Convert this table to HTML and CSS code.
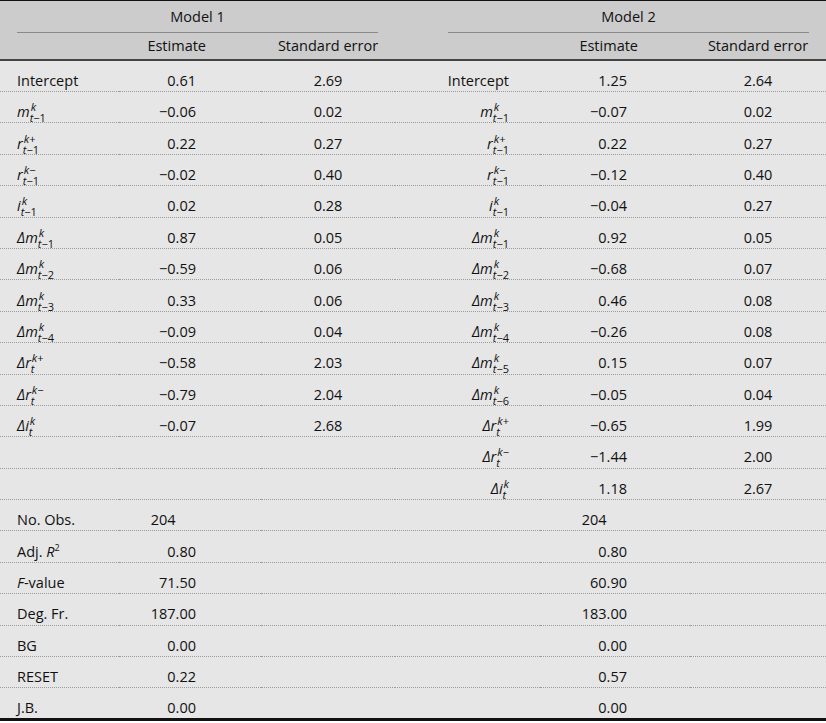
FILE: index.html
```html
<!DOCTYPE html>
<html>
<head>
<meta charset="utf-8">
<link rel="stylesheet" href="styles.css">
</head>
<body>
<table class="tbl">
  <colgroup>
    <col class="c1"><col class="c2"><col class="c3"><col class="c4"><col class="c5"><col class="c6">
  </colgroup>
  <thead>
    <tr class="h1">
      <th colspan="3" class="grp g1"><div class="grp-in">Model 1</div></th>
      <th colspan="3" class="grp g2"><div class="grp-in">Model 2</div></th>
    </tr>
    <tr class="h2">
      <th></th><th class="est1">Estimate</th><th class="se">Standard error</th>
      <th></th><th class="est2">Estimate</th><th class="se">Standard error</th>
    </tr>
  </thead>
  <tbody>
    <tr><td class="l1">Intercept</td><td class="e1">0.61</td><td class="s">2.69</td><td class="l2">Intercept</td><td class="e2">1.25</td><td class="s">2.64</td></tr>
    <tr><td class="l1"><i>m</i><span class="ss"><span class="up"><i>k</i></span><span class="dn"><i>t</i>−1</span></span></td><td class="e1">−0.06</td><td class="s">0.02</td><td class="l2"><i>m</i><span class="ss"><span class="up"><i>k</i></span><span class="dn"><i>t</i>−1</span></span></td><td class="e2">−0.07</td><td class="s">0.02</td></tr>
    <tr><td class="l1"><i>r</i><span class="ss"><span class="up"><i>k</i>+</span><span class="dn"><i>t</i>−1</span></span></td><td class="e1">0.22</td><td class="s">0.27</td><td class="l2"><i>r</i><span class="ss"><span class="up"><i>k</i>+</span><span class="dn"><i>t</i>−1</span></span></td><td class="e2">0.22</td><td class="s">0.27</td></tr>
    <tr><td class="l1"><i>r</i><span class="ss"><span class="up"><i>k</i>−</span><span class="dn"><i>t</i>−1</span></span></td><td class="e1">−0.02</td><td class="s">0.40</td><td class="l2"><i>r</i><span class="ss"><span class="up"><i>k</i>−</span><span class="dn"><i>t</i>−1</span></span></td><td class="e2">−0.12</td><td class="s">0.40</td></tr>
    <tr><td class="l1"><i>i</i><span class="ss"><span class="up"><i>k</i></span><span class="dn"><i>t</i>−1</span></span></td><td class="e1">0.02</td><td class="s">0.28</td><td class="l2"><i>i</i><span class="ss"><span class="up"><i>k</i></span><span class="dn"><i>t</i>−1</span></span></td><td class="e2">−0.04</td><td class="s">0.27</td></tr>
    <tr><td class="l1"><i>Δm</i><span class="ss"><span class="up"><i>k</i></span><span class="dn"><i>t</i>−1</span></span></td><td class="e1">0.87</td><td class="s">0.05</td><td class="l2"><i>Δm</i><span class="ss"><span class="up"><i>k</i></span><span class="dn"><i>t</i>−1</span></span></td><td class="e2">0.92</td><td class="s">0.05</td></tr>
    <tr><td class="l1"><i>Δm</i><span class="ss"><span class="up"><i>k</i></span><span class="dn"><i>t</i>−2</span></span></td><td class="e1">−0.59</td><td class="s">0.06</td><td class="l2"><i>Δm</i><span class="ss"><span class="up"><i>k</i></span><span class="dn"><i>t</i>−2</span></span></td><td class="e2">−0.68</td><td class="s">0.07</td></tr>
    <tr><td class="l1"><i>Δm</i><span class="ss"><span class="up"><i>k</i></span><span class="dn"><i>t</i>−3</span></span></td><td class="e1">0.33</td><td class="s">0.06</td><td class="l2"><i>Δm</i><span class="ss"><span class="up"><i>k</i></span><span class="dn"><i>t</i>−3</span></span></td><td class="e2">0.46</td><td class="s">0.08</td></tr>
    <tr><td class="l1"><i>Δm</i><span class="ss"><span class="up"><i>k</i></span><span class="dn"><i>t</i>−4</span></span></td><td class="e1">−0.09</td><td class="s">0.04</td><td class="l2"><i>Δm</i><span class="ss"><span class="up"><i>k</i></span><span class="dn"><i>t</i>−4</span></span></td><td class="e2">−0.26</td><td class="s">0.08</td></tr>
    <tr><td class="l1"><i>Δr</i><span class="ss"><span class="up"><i>k</i>+</span><span class="dn"><i>t</i></span></span></td><td class="e1">−0.58</td><td class="s">2.03</td><td class="l2"><i>Δm</i><span class="ss"><span class="up"><i>k</i></span><span class="dn"><i>t</i>−5</span></span></td><td class="e2">0.15</td><td class="s">0.07</td></tr>
    <tr><td class="l1"><i>Δr</i><span class="ss"><span class="up"><i>k</i>−</span><span class="dn"><i>t</i></span></span></td><td class="e1">−0.79</td><td class="s">2.04</td><td class="l2"><i>Δm</i><span class="ss"><span class="up"><i>k</i></span><span class="dn"><i>t</i>−6</span></span></td><td class="e2">−0.05</td><td class="s">0.04</td></tr>
    <tr><td class="l1"><i>Δi</i><span class="ss"><span class="up"><i>k</i></span><span class="dn"><i>t</i></span></span></td><td class="e1">−0.07</td><td class="s">2.68</td><td class="l2"><i>Δr</i><span class="ss"><span class="up"><i>k</i>+</span><span class="dn"><i>t</i></span></span></td><td class="e2">−0.65</td><td class="s">1.99</td></tr>
    <tr><td class="l1"></td><td class="e1"></td><td class="s"></td><td class="l2"><i>Δr</i><span class="ss"><span class="up"><i>k</i>−</span><span class="dn"><i>t</i></span></span></td><td class="e2">−1.44</td><td class="s">2.00</td></tr>
    <tr><td class="l1"></td><td class="e1"></td><td class="s"></td><td class="l2"><i>Δi</i><span class="ss"><span class="up"><i>k</i></span><span class="dn"><i>t</i></span></span></td><td class="e2">1.18</td><td class="s">2.67</td></tr>
    <tr><td class="l1">No. Obs.</td><td class="e1">204<span class="ghost">.00</span></td><td class="s"></td><td class="l2"></td><td class="e2">204<span class="ghost">.00</span></td><td class="s"></td></tr>
    <tr><td class="l1">Adj. <i>R</i><sup class="sq">2</sup></td><td class="e1">0.80</td><td class="s"></td><td class="l2"></td><td class="e2">0.80</td><td class="s"></td></tr>
    <tr><td class="l1"><i>F</i>-value</td><td class="e1">71.50</td><td class="s"></td><td class="l2"></td><td class="e2">60.90</td><td class="s"></td></tr>
    <tr><td class="l1">Deg. Fr.</td><td class="e1">187.00</td><td class="s"></td><td class="l2"></td><td class="e2">183.00</td><td class="s"></td></tr>
    <tr><td class="l1">BG</td><td class="e1">0.00</td><td class="s"></td><td class="l2"></td><td class="e2">0.00</td><td class="s"></td></tr>
    <tr><td class="l1">RESET</td><td class="e1">0.22</td><td class="s"></td><td class="l2"></td><td class="e2">0.57</td><td class="s"></td></tr>
    <tr class="last"><td class="l1">J.B.</td><td class="e1">0.00</td><td class="s"></td><td class="l2"></td><td class="e2">0.00</td><td class="s"></td></tr>
  </tbody>
</table>
</body>
</html>
```
FILE: styles.css
```css
html, body {
  margin: 0;
  padding: 0;
  background: #ffffff;
}
body {
  font-family: "Open Sans", "Noto Sans", sans-serif;
  font-size: 14.5px;
  color: #111;
}
.tbl {
  width: 826px;
  table-layout: fixed;
  border-collapse: collapse;
  border-spacing: 0;
}
.c1 { width: 119px; }
.c2 { width: 142px; }
.c3 { width: 134px; }
.c4 { width: 145px; }
.c5 { width: 150px; }
.c6 { width: 136px; }

thead {
  background: #cccccc;
}
thead th {
  font-weight: normal;
  padding: 0;
}
.h1 th {
  border-top: 1px solid #111;
  height: 32px;
  vertical-align: top;
}
.grp-in {
  text-align: center;
  border-bottom: 1px solid #8a8a8a;
  height: 31px;
  line-height: 31px;
}
.g1 { padding: 0 17px 0 17px; }
.g2 { padding: 0 17px 0 53px; }
.h2 th {
  height: 26px;
  border-bottom: 2px solid #444;
  line-height: 26px;
}
.est1 { text-align: right; padding-right: 55px !important; }
.est2 { text-align: right; padding-right: 52px !important; }
.se { text-align: center; }

tbody {
  background: #e6e6e6;
}
tbody td {
  box-sizing: border-box;
  height: 31.4px;
  padding: 0;
  padding-top: 10px;
  border-bottom: 1px dotted #9a9a9a;
  line-height: 20px;
  vertical-align: middle;
  white-space: nowrap;
}
tbody tr.last td {
  border-bottom: 3px solid #111;
}
.l1 { padding-left: 17px; text-align: left; }
.e1 { text-align: right; padding-right: 65px; }
.s { text-align: center; }
.l2 { text-align: right; padding-right: 31px; }
.e2 { text-align: right; padding-right: 63px; }

.ss {
  display: inline-flex;
  flex-direction: column;
  align-items: flex-start;
  vertical-align: 6px;
  font-size: 11px;
  line-height: 11px;
  margin: -7px 0 -7px 0;
  height: 22px;
}
.ss .up { padding-left: 1px; }
.sq {
  font-size: 9px;
  vertical-align: 6px;
  line-height: 0;
}
.ghost { visibility: hidden; }
i { font-style: italic; }
```
